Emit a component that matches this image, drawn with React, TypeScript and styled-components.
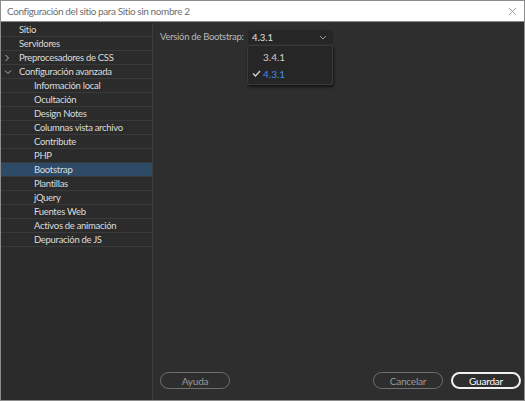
import React from "react";
import styled, { createGlobalStyle } from "styled-components";

const GlobalStyle = createGlobalStyle`
  html, body {
    margin: 0;
    padding: 0;
    background: #2e2e2e;
  }
  body {
    font-family: Lato, "Noto Sans", sans-serif;
  }
`;

const menu = [
  { label: "Sitio", level: 0 },
  { label: "Servidores", level: 0 },
  { label: "Preprocesadores de CSS", level: 0, arrow: "closed" },
  { label: "Configuración avanzada", level: 0, arrow: "open" },
  { label: "Información local", level: 1 },
  { label: "Ocultación", level: 1 },
  { label: "Design Notes", level: 1 },
  { label: "Columnas vista archivo", level: 1 },
  { label: "Contribute", level: 1 },
  { label: "PHP", level: 1 },
  { label: "Bootstrap", level: 1, selected: true },
  { label: "Plantillas", level: 1 },
  { label: "jQuery", level: 1 },
  { label: "Fuentes Web", level: 1 },
  { label: "Activos de animación", level: 1 },
  { label: "Depuración de JS", level: 1 },
];

export default function App() {
  return (
    <>
      <GlobalStyle />
      <Window>
        <TitleBar>
          <Title>Configuración del sitio para Sitio sin nombre 2</Title>
          <Close viewBox="0 0 10 10">
            <path d="M1 1 L9 9 M9 1 L1 9" stroke="#9a9a9a" strokeWidth="1" />
          </Close>
        </TitleBar>
        <Body>
          <Sidebar>
            {menu.map((item) => (
              <Row key={item.label} $selected={!!item.selected}>
                <Arrow>
                  {item.arrow === "closed" && (
                    <svg width="6" height="8" viewBox="0 0 6 8">
                      <path d="M1.5 1 L4.5 4 L1.5 7" stroke="#b5b5b5" fill="none" />
                    </svg>
                  )}
                  {item.arrow === "open" && (
                    <svg width="8" height="6" viewBox="0 0 8 6">
                      <path d="M1 1.5 L4 4.5 L7 1.5" stroke="#b5b5b5" fill="none" />
                    </svg>
                  )}
                </Arrow>
                <RowLabel $level={item.level}>{item.label}</RowLabel>
              </Row>
            ))}
          </Sidebar>
          <Content>
            <Field>
              <FieldLabel>Versión de Bootstrap:</FieldLabel>
              <SelectWrap>
                <Select>
                  <span>4.3.1</span>
                  <svg width="8" height="5" viewBox="0 0 8 5">
                    <path d="M1 1 L4 4 L7 1" stroke="#9a9a9a" fill="none" />
                  </svg>
                </Select>
                <Dropdown>
                  <Option>
                    <Check />
                    <span>3.4.1</span>
                  </Option>
                  <Option $active>
                    <Check>
                      <svg width="9" height="7" viewBox="0 0 9 7">
                        <path d="M1 3.5 L3.5 6 L8 1" stroke="#d0d0d0" strokeWidth="1.4" fill="none" />
                      </svg>
                    </Check>
                    <span>4.3.1</span>
                  </Option>
                </Dropdown>
              </SelectWrap>
            </Field>
            <Spacer />
            <Footer>
              <Button>Ayuda</Button>
              <Grow />
              <Button>Cancelar</Button>
              <Button $primary>Guardar</Button>
            </Footer>
          </Content>
        </Body>
      </Window>
    </>
  );
}

const Window = styled.div`
  width: 525px;
  height: 401px;
  box-sizing: border-box;
  border: 1px solid #8c8c8c;
  display: flex;
  flex-direction: column;
  background: #2e2e2e;
`;

const TitleBar = styled.div`
  height: 20px;
  background: #ffffff;
  border-bottom: 1px solid #8a8a8a;
  display: flex;
  align-items: center;
  padding: 0 7px 0 6px;
`;

const Title = styled.div`
  flex: 1;
  font-size: 10px;
  letter-spacing: -0.4px;
  color: #6f6f6f;
  white-space: nowrap;
`;

const Close = styled.svg`
  width: 9px;
  height: 9px;
`;

const Body = styled.div`
  flex: 1;
  display: flex;
  min-height: 0;
  padding-top: 1px;
`;

const Sidebar = styled.div`
  width: 151px;
  background: #2b2b2b;
  border-right: 1px solid #3d3d3d;
  display: flex;
  flex-direction: column;
`;

const Row = styled.div<{ $selected: boolean }>`
  height: 13px;
  border-bottom: 1px solid #393939;
  display: flex;
  align-items: center;
  background: ${(p) => (p.$selected ? "#2d4a67" : "transparent")};
`;

const Arrow = styled.div`
  width: 18px;
  display: flex;
  align-items: center;
  padding-left: 3px;
  box-sizing: border-box;
`;

const RowLabel = styled.span<{ $level: number }>`
  font-size: 9.5px;
  letter-spacing: -0.3px;
  color: #dcdcdc;
  padding-left: ${(p) => p.$level * 15}px;
  white-space: nowrap;
  line-height: 13px;
`;

const Content = styled.div`
  flex: 1;
  display: flex;
  flex-direction: column;
  padding: 7px 3px 11px 7px;
`;

const Field = styled.div`
  display: flex;
  align-items: flex-start;
`;

const FieldLabel = styled.div`
  width: 88px;
  font-size: 9.5px;
  letter-spacing: -0.3px;
  color: #b8b8b8;
  line-height: 14px;
  white-space: nowrap;
`;

const SelectWrap = styled.div`
  position: relative;
`;

const Select = styled.div`
  width: 85px;
  height: 14px;
  box-sizing: border-box;
  background: #262626;
  border-radius: 2px;
  display: flex;
  align-items: center;
  justify-content: space-between;
  padding: 0 6px 0 4px;
  font-size: 9.5px;
  color: #e0e0e0;
`;

const Dropdown = styled.div`
  position: absolute;
  top: 15px;
  left: -1px;
  width: 86px;
  box-sizing: border-box;
  background: #262626;
  border: 1px solid #3a3a3a;
  border-radius: 2px;
  box-shadow: 1px 2px 3px rgba(0, 0, 0, 0.6);
  padding: 2px 0;
`;

const Option = styled.div<{ $active?: boolean }>`
  height: 17px;
  display: flex;
  align-items: center;
  font-size: 10px;
  color: ${(p) => (p.$active ? "#3d8ee8" : "#cfcfcf")};
`;

const Check = styled.span`
  width: 14px;
  display: flex;
  justify-content: center;
  padding-left: 1px;
`;

const Spacer = styled.div`
  flex: 1;
`;

const Footer = styled.div`
  display: flex;
  gap: 8px;
  align-items: center;
`;

const Grow = styled.div`
  flex: 1;
`;

const Button = styled.button<{ $primary?: boolean }>`
  width: 70px;
  height: 17px;
  box-sizing: border-box;
  border-radius: 9px;
  background: transparent;
  border: ${(p) => (p.$primary ? "2px solid #f0f0f0" : "1px solid #707070")};
  color: ${(p) => (p.$primary ? "#ffffff" : "#9a9a9a")};
  font-family: Lato, "Noto Sans", sans-serif;
  font-size: 10px;
  letter-spacing: -0.2px;
  padding: 0;
  cursor: pointer;
`;
